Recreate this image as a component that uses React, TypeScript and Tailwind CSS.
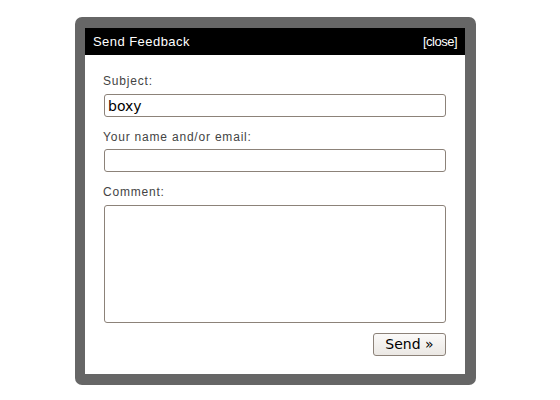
export default function App() {
  return (
    <div className="min-h-[400px] w-[560px] bg-white pt-[17px] pl-[75px]">
      <div className="w-[401px] h-[368px] rounded-[7px] bg-[#666666] pl-[10px] pr-[11px] pt-[11px] pb-[11px]">
        <div className="flex h-full flex-col bg-white">
          {/* Title bar */}
          <div className="flex h-[27px] items-center justify-between bg-black pl-[8px] pr-[8px] font-['Liberation_Sans',Arial,sans-serif] text-[13px] text-white">
            <span className="tracking-[0.45px]">Send Feedback</span>
            <span className="tracking-[-0.5px]">[close]</span>
          </div>

          {/* Form */}
          <div className="flex flex-col pl-[18px] pr-[19px] pt-[19px] font-['Liberation_Sans',Arial,sans-serif] text-[12px] tracking-[0.8px] text-[#444]">
            <label className="leading-[14px]">Subject:</label>
            <input
              defaultValue="boxy"
              className="mt-[6px] ml-[1px] h-[23px] rounded-[3px] border border-[#8c8279] bg-white px-[3px] font-['DejaVu_Sans',sans-serif] text-[14px] tracking-normal text-black outline-none"
            />
            <label className="mt-[13px] leading-[14px]">Your name and/or email:</label>
            <input className="mt-[5px] ml-[1px] h-[23px] rounded-[3px] border border-[#8c8279] bg-white px-[3px] outline-none" />
            <label className="mt-[13px] leading-[14px]">Comment:</label>
            <textarea className="mt-[6px] ml-[1px] h-[118px] resize-none rounded-[3px] border border-[#8c8279] bg-white outline-none" />
            <div className="mt-[10px] flex justify-end">
              <button className="h-[23px] w-[73px] rounded-[3px] border border-[#8c8279] bg-gradient-to-b from-[#fbfaf9] to-[#ebe8e4] font-['DejaVu_Sans',sans-serif] text-[14px] tracking-normal text-black">
                Send »
              </button>
            </div>
          </div>
        </div>
      </div>
    </div>
  );
}
